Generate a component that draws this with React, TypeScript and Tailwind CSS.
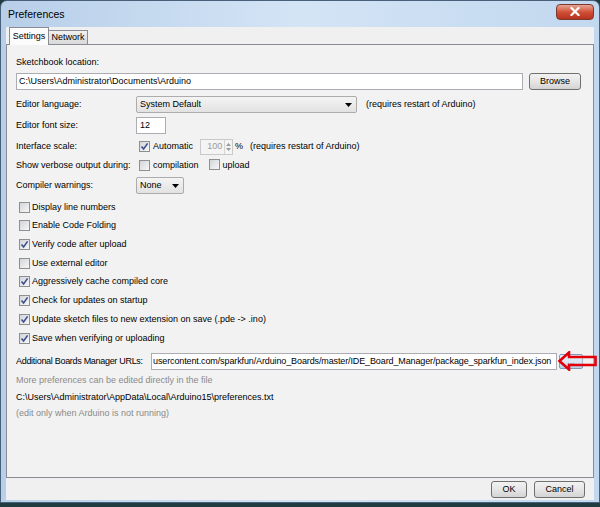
import React from 'react'

const font = "font-['Liberation_Sans',Arial,sans-serif]"

const Check = ({ checked = false }: { checked?: boolean }) => (
  <span className="inline-flex h-[11px] w-[11px] shrink-0 items-center justify-center border border-[#8e8f8f] bg-gradient-to-br from-[#d2d5da] to-[#f7f7f7]">
    {checked && (
      <svg width="9" height="9" viewBox="0 0 9 9">
        <path d="M1.5 4.5 L3.6 7 L7.6 1.4" fill="none" stroke="#3c4f8a" strokeWidth="1.6" />
      </svg>
    )}
  </span>
)

const Caret = () => (
  <svg width="7" height="4" viewBox="0 0 7 4">
    <path d="M0 0 H7 L3.5 4 Z" fill="#000" />
  </svg>
)

const Button = ({ label, className = '' }: { label: string; className?: string }) => (
  <div
    className={`flex h-[17px] items-center justify-center rounded-[3px] border border-[#707070] bg-gradient-to-b from-[#f2f2f2] via-[#e6e6e6] to-[#d3d3d3] ${className}`}
  >
    {label}
  </div>
)

const options: [string, boolean][] = [
  ['Display line numbers', false],
  ['Enable Code Folding', false],
  ['Verify code after upload', true],
  ['Use external editor', false],
  ['Aggressively cache compiled core', true],
  ['Check for updates on startup', true],
  ['Update sketch files to new extension on save (.pde -> .ino)', true],
  ['Save when verifying or uploading', true],
]

export default function App() {
  return (
    <div className={`h-[507px] w-[600px] overflow-hidden bg-[#213c40] text-[9px] leading-[11px] text-black ${font}`}>
      <div className="flex h-[503px] flex-col rounded-t-[7px] border border-[#49607a] bg-gradient-to-r from-[#b8cfe9] via-[#d3e4f5] to-[#c2d8ef]">
        {/* title bar */}
        <div className="flex h-[26px] shrink-0 items-center justify-between pl-[7px] pr-[5px]">
          <span className="text-[10.5px]">Preferences</span>
          <div className="-mt-[5px] flex h-[16px] w-[38px] items-center justify-center rounded-[4px] border border-[#7a3a2f] bg-gradient-to-b from-[#e8a493] via-[#d05038] to-[#b8321d]">
            <svg width="10" height="9" viewBox="0 0 10 9">
              <path d="M1.5 1 L8.5 8 M8.5 1 L1.5 8" stroke="#fff" strokeWidth="2.2" strokeLinecap="square" />
            </svg>
          </div>
        </div>

        {/* client area */}
        <div className="mx-[5px] flex h-[473px] flex-col bg-[#f0f0f0]">
          {/* tabs */}
          <div className="relative z-10 flex h-[17px] shrink-0 items-end pl-[3px]">
            <div className="-mb-[1px] flex h-[18px] w-[40px] items-center justify-center border border-b-0 border-[#898c95] bg-[#fcfcfc] pb-[1px]">
              Settings
            </div>
            <div className="flex h-[14px] w-[39px] items-center justify-center border border-b-0 border-l-0 border-[#898c95] bg-gradient-to-b from-[#f0f0f0] to-[#d9d9d9]">
              Network
            </div>
          </div>

          {/* pane */}
          <div className="flex h-[434px] shrink-0 flex-col border border-[#898c95] bg-[#f2f2f2] pl-[9px] pr-[10px]">
            <div className="mt-[11px] flex h-[12px] items-center">Sketchbook location:</div>

            <div className="mt-[5px] flex h-[17px] items-center gap-[6px]">
              <div className="flex h-[17px] w-[507px] items-center border border-[#abadb3] bg-white pl-[2px]">
                C:\Users\Administrator\Documents\Arduino
              </div>
              <Button label="Browse" className="w-[52px]" />
            </div>

            <div className="mt-[6px] flex h-[17px] items-center">
              <span className="w-[120px]">Editor language:</span>
              <div className="flex h-[17px] w-[221px] items-center justify-between rounded-[2px] border border-[#acacac] bg-gradient-to-b from-[#f4f4f4] to-[#e2e2e2] pl-[3px] pr-[4px]">
                <span>System Default</span>
                <Caret />
              </div>
              <span className="ml-[9px]">(requires restart of Arduino)</span>
            </div>

            <div className="mt-[4px] flex h-[17px] items-center">
              <span className="w-[120px]">Editor font size:</span>
              <div className="flex h-[17px] w-[30px] items-center border border-[#abadb3] bg-white pl-[3px]">12</div>
            </div>

            <div className="mt-[4px] flex h-[17px] items-center">
              <span className="w-[123px]">Interface scale:</span>
              <Check checked />
              <span className="ml-[3px]">Automatic</span>
              <div className="ml-[7px] flex h-[16px] w-[33px] items-center border border-[#c9c9c9] bg-[#f4f4f4]">
                <span className="w-[24px] pr-[2px] text-right text-[#9a9a9a]">100</span>
                <div className="flex h-full w-[8px] flex-col items-center justify-center gap-[2px] border-l border-[#d4d4d4]">
                  <svg width="5" height="3" viewBox="0 0 5 3"><path d="M0 3 H5 L2.5 0 Z" fill="#9a9a9a" /></svg>
                  <svg width="5" height="3" viewBox="0 0 5 3"><path d="M0 0 H5 L2.5 3 Z" fill="#9a9a9a" /></svg>
                </div>
              </div>
              <span className="ml-[2px]">%</span>
              <span className="ml-[7px]">(requires restart of Arduino)</span>
            </div>

            <div className="mt-[2px] flex h-[17px] items-center">
              <span className="w-[123px]">Show verbose output during:</span>
              <Check />
              <span className="ml-[3px]">compilation</span>
              <span className="ml-[10px]"><Check /></span>
              <span className="ml-[3px]">upload</span>
            </div>

            <div className="mt-[3px] flex h-[17px] items-center">
              <span className="w-[120px]">Compiler warnings:</span>
              <div className="flex h-[17px] w-[48px] items-center justify-between rounded-[2px] border border-[#acacac] bg-gradient-to-b from-[#f4f4f4] to-[#e2e2e2] pl-[3px] pr-[4px]">
                <span>None</span>
                <Caret />
              </div>
            </div>

            <div className="mt-[3.7px] flex flex-col">
              {options.map(([label, checked]) => (
                <div key={label} className="flex h-[18.72px] items-center pl-[3px]">
                  <Check checked={checked} />
                  <span className="ml-[2px]">{label}</span>
                </div>
              ))}
            </div>

            <div className="relative mt-[5.6px] flex h-[17px] items-center">
              <span className="w-[135px] shrink-0 whitespace-nowrap tracking-[-0.3px]">Additional Boards Manager URLs:</span>
              <div className="flex h-[17px] w-[406px] shrink-0 items-center overflow-hidden whitespace-nowrap border border-[#abadb3] bg-white pl-[1px] tracking-[-0.12px]">
                usercontent.com/sparkfun/Arduino_Boards/master/IDE_Board_Manager/package_sparkfun_index.json
              </div>
              <div className="ml-[2px] flex h-[15px] w-[24px] items-center justify-center rounded-[2px] border border-[#7f9db9] bg-gradient-to-b from-[#e8f1fb] to-[#b9d1ea]">
                <span className="text-[#2a4a7a]">...</span>
              </div>
              <svg className="absolute left-[542px] top-[-2px]" width="40" height="20" viewBox="0 0 40 20">
                <path
                  d="M1.5 10 L11 1.5 L11 6 L37.5 6 L37.5 14 L11 14 L11 18.5 Z"
                  fill="#f2f2f2"
                  fillOpacity="0.35"
                  stroke="#e2000b"
                  strokeWidth="2.6"
                  strokeLinejoin="miter"
                />
              </svg>
            </div>

            <div className="mt-[4px] flex h-[12px] items-center text-[#8a8a8a]">More preferences can be edited directly in the file</div>
            <div className="mt-[5px] flex h-[12px] items-center">C:\Users\Administrator\AppData\Local\Arduino15\preferences.txt</div>
            <div className="mt-[4px] flex h-[12px] items-center text-[#8a8a8a]">(edit only when Arduino is not running)</div>
          </div>

          {/* bottom buttons */}
          <div className="flex flex-1 items-center justify-end gap-[7px] pr-[9px]">
            <Button label="OK" className="w-[36px]" />
            <Button label="Cancel" className="w-[51px]" />
          </div>
        </div>
      </div>
    </div>
  )
}
